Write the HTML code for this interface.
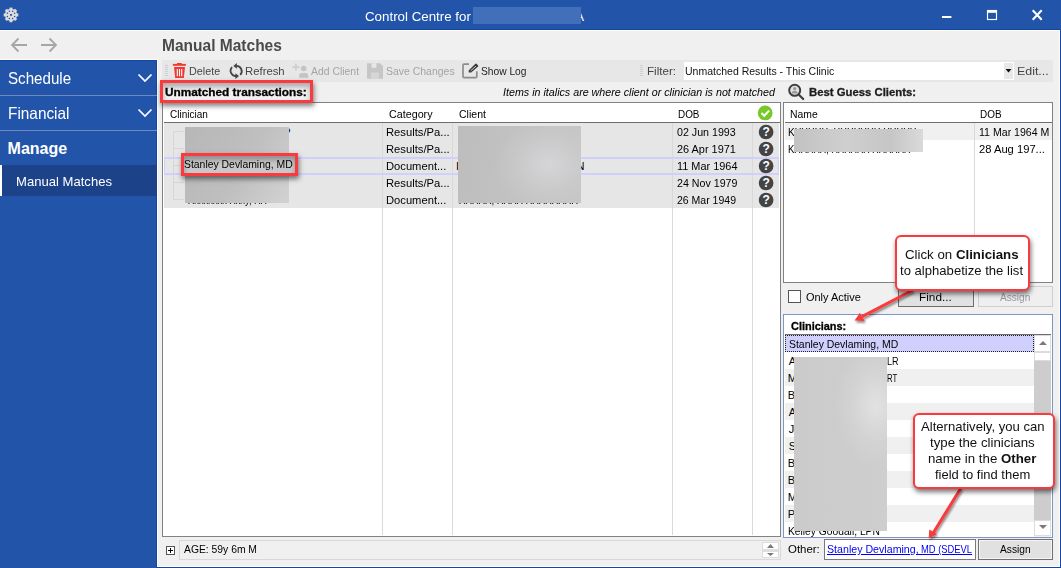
<!DOCTYPE html>
<html lang="en">
<head>
<meta charset="utf-8">
<title>Control Centre - Manual Matches</title>
<style>
*{box-sizing:border-box;margin:0;padding:0}
html,body{width:1061px;height:568px;overflow:hidden}
body{background:#f0f0f0;font-family:"Liberation Sans",Arial,sans-serif;font-size:11px;color:#000;position:relative}
.a,.t{position:absolute}
.t{white-space:nowrap;line-height:20px;transform-origin:0 50%;color:#000}
#titlebar{left:0;top:0;width:1061px;height:30px;background:#2255aa;border-bottom:1px solid #1247a8}
#sidebar{left:0;top:60px;width:157px;height:508px;background:#2255aa;border-top:1px solid #1247a8;border-right:1px solid #1247a8}
.sep{left:0;width:157px;height:1px;background:#7089c0}
.grid{background:#fff;border:1px solid #828282}
.vl{width:1px;background:#d9d9d9}
.hl{height:1px;background:#6e6e6e}
.q{width:15px;height:15px;border-radius:50%;background:#404040;color:#fff;font-weight:bold;font-size:12px;text-align:center;line-height:15px}
.red{border:3px solid #fa3a3e;box-shadow:1px 3px 5px rgba(0,0,0,.5),inset 0 4px 5px rgba(0,0,0,.28)}
.call{background:#fff;border:2px solid #fa3a3e;border-radius:6px;box-shadow:1px 3px 5px rgba(0,0,0,.55)}
.ct{font-size:13.33px;color:#111}
.btn{border:1px solid #adadad;background:#e1e1e1}
.grip{width:3px;height:11px;background:repeating-linear-gradient(#cfcfcf 0 1px,transparent 1px 2px)}
.lr{left:785px;width:249px;height:17px}
</style>
</head>
<body>
<!-- ===== title bar ===== -->
<div id="titlebar" class="a"></div>
<svg class="a" style="left:3px;top:7px" width="16" height="16" viewBox="0 0 16 16"><g fill="#dcdcdc"><circle cx="8" cy="7.900" r="6.100"/><g><rect x="6.500" y=".6" width="3" height="3"/><rect x="6.500" y="12.200" width="3" height="3"/><rect x=".7" y="6.400" width="3" height="3"/><rect x="12.300" y="6.400" width="3" height="3"/></g><g transform="rotate(45 8 7.900)"><rect x="6.500" y=".6" width="3" height="3"/><rect x="6.500" y="12.200" width="3" height="3"/><rect x=".7" y="6.400" width="3" height="3"/><rect x="12.300" y="6.400" width="3" height="3"/></g></g><g fill="#2255aa"><rect x="7.100" y="7" width="1.800" height="1.800"/><circle cx="6.400" cy="4.300" r=".75"/><circle cx="9.600" cy="4.300" r=".75"/><circle cx="4.400" cy="6.300" r=".75"/><circle cx="11.600" cy="6.300" r=".75"/><circle cx="4.400" cy="9.500" r=".75"/><circle cx="11.600" cy="9.500" r=".75"/><circle cx="6.400" cy="11.500" r=".75"/><circle cx="9.600" cy="11.500" r=".75"/></g></svg>
<div class="t" style="left:575px;top:7px;font-size:13.5px;color:#fff">A</div>
<div class="a" style="left:473px;top:7px;width:108px;height:17px;background:#426fba"></div>
<svg class="a" style="left:936px;top:5px" width="112" height="20" viewBox="0 0 112 20"><g fill="none" stroke="#fff"><path d="M6 12h9.400" stroke-width="2"/><rect x="51.500" y="5.500" width="9" height="9" stroke-width="1.150"/><path d="M51 6.400h10" stroke-width="2.800"/><path d="M96.700 5.300l9 9.400M105.700 5.300l-9 9.400" stroke-width="2.100"/></g></svg>
<div class="a" style="left:0;top:30px;width:1060px;height:537px;border:1px solid #fffdf6;border-left:0"></div>
<div class="a" style="left:1060px;top:30px;width:1px;height:538px;background:#1247a8"></div>
<div class="a" style="left:157px;top:567px;width:904px;height:1px;background:#1247a8"></div>
<div class="a" style="left:0;top:59px;width:158px;height:1px;background:#fffdf6"></div>
<div class="a" style="left:157px;top:59px;width:1px;height:508px;background:#fffdf6"></div>

<!-- ===== nav row ===== -->
<svg class="a" style="left:10px;top:37px" width="50" height="16" viewBox="0 0 50 16"><g fill="none" stroke="#a6a6a6" stroke-width="1.800"><path d="M17 8H2M8.500 1.500L2 8l6.500 6.500"/><path d="M31 8h15M39.500 1.500L46 8l-6.500 6.500"/></g></svg>

<!-- ===== sidebar ===== -->
<div id="sidebar" class="a"></div>
<div class="a sep" style="top:95px"></div>
<div class="a sep" style="top:130px"></div>
<div class="a" style="left:0;top:165px;width:157px;height:31px;background:#1c4389"></div>
<div class="a" style="left:0;top:165px;width:2px;height:31px;background:#fff"></div>
<svg class="a" style="left:137px;top:72px" width="16" height="50" viewBox="0 0 16 50"><g fill="none" stroke="#fff" stroke-width="1.700"><path d="M1.500 2.500l6.500 6.500 6.500-6.500"/><path d="M1.500 37.500l6.500 6.500 6.500-6.500"/></g></svg>

<!-- ===== toolbar ===== -->
<div class="a" style="left:162px;top:60px;width:891px;height:22px;background:#e7e7e7"></div>
<div class="a grip" style="left:165px;top:65px"></div>
<div class="a grip" style="left:640px;top:65px"></div>
<svg class="a" style="left:172px;top:62px" width="16" height="17" viewBox="0 0 16 17"><g fill="#f0392f"><rect x="5" y="1" width="4.700" height="1.500"/><rect x=".9" y="1.900" width="13" height="1.900"/><path d="M2 4.900h11l-1.200 11.200H3.200z"/></g><g stroke="#fff" stroke-width="1.100"><path d="M5.300 7v7.200M7.500 7v7.200M9.700 7v7.200"/></g></svg>
<svg class="a" style="left:229px;top:62px" width="15" height="18" viewBox="0 0 15 18"><g transform="translate(14.400 0) scale(-1 1)"><g fill="none" stroke="#444" stroke-width="1.800"><path d="M3.200 12.900A5.300 5.300 0 0 1 7.200 3.900"/><path d="M11.300 5.100A5.300 5.300 0 0 1 7.300 14.100"/></g><path d="M6.500 1l3.600 2.900-3.600 2.900z" fill="#444"/><path d="M8 11.200l-3.600 2.900L8 17z" fill="#444"/></g></svg>
<svg class="a" style="left:291px;top:62px" width="18" height="17" viewBox="0 0 18 17"><path d="M1.300 5h7.200M4.900 1.400v7.200" stroke="#d0d0d0" stroke-width="1.800" fill="none"/><g fill="#c4c4c4"><circle cx="12.700" cy="6.500" r="2.800"/><path d="M8.200 15.700v-2.400c0-1.400 1.300-2.300 2.800-2.300h3.400c1.500 0 2.800.9 2.800 2.300v2.400z"/></g></svg>
<svg class="a" style="left:367px;top:62px" width="17" height="17" viewBox="0 0 17 17"><path d="M0 1.200h13.200L16 4v12.700H0z" fill="#c6c6c6"/><rect x="4.600" y="1.200" width="4.800" height="4.600" fill="#e7e7e7"/><rect x="4" y="10.500" width="8" height="6.200" fill="#d6d6d6"/></svg>
<svg class="a" style="left:461px;top:62px" width="18" height="17" viewBox="0 0 18 17"><path d="M8 2.200H3.200a1.200 1.200 0 0 0-1.200 1.200v11a1.200 1.200 0 0 0 1.200 1.200h11.400a1.200 1.200 0 0 0 1.200-1.200V9.200" fill="none" stroke="#8c8c8c" stroke-width="1.700"/><path d="M7.800 10.600l-.2-2.200 6.800-6.600a.8.800 0 0 1 1.100 0l1.600 1.700a.8.800 0 0 1 0 1.100l-6.900 6z" fill="#3c3c3c"/><path d="M9.600 8.800l5.400-4.700" stroke="#e7e7e7" stroke-width=".8" fill="none"/></svg>
<div class="a" style="left:684px;top:62px;width:330px;height:18px;background:#fff"></div>
<div class="a" style="left:1004px;top:63px;width:9px;height:16px;background:#e8e8e8"></div>
<svg class="a" style="left:1005px;top:69px" width="7" height="4" viewBox="0 0 7 4"><path d="M.5 0h6L3.500 3.500z" fill="#111"/></svg>

<!-- ===== sub header ===== -->
<svg class="a" style="left:786px;top:83px" width="20" height="20" viewBox="0 0 20 20"><circle cx="8.700" cy="7.300" r="5.500" fill="#e2e2e2" stroke="#3e3e3e" stroke-width="2"/><circle cx="8.700" cy="5.700" r="1.700" fill="#999"/><path d="M5.600 10.400c0-1.700 1.400-2.300 3.100-2.300s3.100.6 3.100 2.300z" fill="#999"/><path d="M12.900 11.700l4.300 4.300" stroke="#3e3e3e" stroke-width="2.200" stroke-linecap="round"/></svg>

<!-- ===== left grid ===== -->
<div class="a grid" style="left:162px;top:102px;width:619px;height:435px">
  <div class="a hl" style="left:1px;top:19px;width:616px"></div>
  <div class="a" style="left:1px;top:20px;width:615px;height:85px;background:#e6e6e6"></div>
  <div class="a vl" style="left:219px;top:20px;height:412px"></div>
  <div class="a vl" style="left:289px;top:20px;height:412px"></div>
  <div class="a vl" style="left:509px;top:20px;height:412px"></div>
  <div class="a vl" style="left:589px;top:20px;height:412px"></div>
  <div class="a" style="left:1px;top:54px;width:615px;height:18px;border:2px solid #d0d0ff;border-left-width:1px;border-right-width:1px"></div>
</div>
<svg class="a" style="left:757px;top:105px" width="16" height="16" viewBox="0 0 16 16"><circle cx="8.200" cy="7.900" r="7.400" fill="#78c82c"/><path d="M4.500 8.100l2.700 2.700 4.900-5.200" fill="none" stroke="#fff" stroke-width="2.100"/></svg>
<svg class="a" style="left:172px;top:126px" width="14" height="80" viewBox="0 0 14 80"><path d="M1.500 5.500h11M1.500 5.500v68M1.500 22.500h11M1.500 39.500h11M1.500 56.500h11M1.500 73.500h11" fill="none" stroke="#d6d6d6" stroke-width="1"/></svg>
<div class="t" style="left:456px;top:156px">I</div>
<div class="t" style="left:283.2px;top:122px;">P</div>
<div class="t" style="left:188.0px;top:190px;transform:scaleX(0.848);">Xxxxxxxx Xxxy, XX</div>
<div class="t" style="left:576.5px;top:156px;">N</div>
<div class="t" style="left:459.0px;top:190px;transform:scaleX(0.888);">XXXXX, XXXX XXXXXXXX</div>
<div class="a" style="left:185px;top:127px;width:104px;height:76px;background:linear-gradient(120deg,#b7b7b7 0%,#bfbfbf 55%,#d2d2d2 100%)"></div>
<div class="a" style="left:458px;top:126px;width:123px;height:77px;background:radial-gradient(ellipse 45% 60% at 74% 50%,#d5d5d7 0%,rgba(204,204,206,.6) 60%,rgba(196,196,196,0) 100%),linear-gradient(100deg,#bdbdbd 0%,#c2c2c2 50%,#c6c6c6 100%)"></div>
<div class="a red" style="left:181px;top:153px;width:117px;height:23px;background:#c8c8c8"></div>

<!-- ===== right grid ===== -->
<div class="a grid" style="left:783px;top:102px;width:270px;height:181px">
  <div class="a hl" style="left:1px;top:19px;width:267px"></div>
  <div class="a" style="left:1px;top:20px;width:267px;height:17px;background:#f0f0f0"></div>
  <div class="a vl" style="left:190px;top:20px;height:159px"></div>
</div>
<div class="t" style="left:787.7px;top:122px;transform:scaleX(0.910);">KXXXXX, XXXXXXX XXXXX</div>
<div class="t" style="left:787.7px;top:139px;transform:scaleX(0.867);">KXXXXX, XXXXXX XXXXXX</div>
<div class="a" style="left:794px;top:129px;width:129px;height:23px;background:linear-gradient(90deg,#c2c2c2,#cfcfcf 40%,#c6c6c6 75%,#dadada)"></div>

<!-- ===== checkbox + buttons ===== -->
<div class="a" style="left:788px;top:290px;width:13px;height:13px;background:#fff;border:1px solid #555"></div>
<div class="a btn" style="left:898px;top:286px;width:76px;height:21px;border-color:#6e6e6e"></div>
<div class="a btn" style="left:978px;top:286px;width:75px;height:21px;background:#efefef;border-color:#cfcfcf"></div>

<!-- ===== clinicians ===== -->
<div class="a" style="left:783px;top:314px;width:270px;height:224px;background:#fff;border:1px solid #7b97c7"></div>
<div class="a" style="left:785px;top:334px;width:266px;height:1px;background:#6e6e6e"></div>
<div class="a lr" style="top:335px;height:17px;background:#d0d0ff;outline:1px dotted #222;outline-offset:-1px"></div><div class="t" style="left:788.7px;top:334px;transform:scaleX(0.950);">Stanley Devlaming, MD</div>
<div class="a lr" style="top:352px;height:17px;background:#fff"></div><div class="t" style="left:788.7px;top:351px;">A</div>
<div class="a lr" style="top:369px;height:17px;background:#f0f0f0"></div><div class="t" style="left:787.7px;top:368px;">M</div>
<div class="a lr" style="top:386px;height:17px;background:#fff"></div><div class="t" style="left:787.7px;top:385px;">B</div>
<div class="a lr" style="top:403px;height:17px;background:#f0f0f0"></div><div class="t" style="left:788.7px;top:402px;">A</div>
<div class="a lr" style="top:420px;height:17px;background:#fff"></div><div class="t" style="left:788.7px;top:419px;">J</div>
<div class="a lr" style="top:437px;height:17px;background:#f0f0f0"></div><div class="t" style="left:788.7px;top:436px;">S</div>
<div class="a lr" style="top:454px;height:17px;background:#fff"></div><div class="t" style="left:787.7px;top:453px;">B</div>
<div class="a lr" style="top:471px;height:17px;background:#f0f0f0"></div><div class="t" style="left:787.7px;top:470px;">B</div>
<div class="a lr" style="top:488px;height:17px;background:#fff"></div><div class="t" style="left:787.7px;top:487px;">M</div>
<div class="a lr" style="top:505px;height:17px;background:#f0f0f0"></div><div class="t" style="left:787.7px;top:504px;">P</div>
<div class="a lr" style="top:522px;height:15px;background:#fff"></div><div class="t" style="left:787.8px;top:521px;transform:scaleX(0.933);">Kelley Goodall, LPN</div>
<div class="t" style="left:886.5px;top:351px;transform:scaleX(0.823);">LR</div>
<div class="t" style="left:886.6px;top:368px;transform:scaleX(0.707);">RT</div>
<div class="a" style="left:794px;top:357px;width:93px;height:174px;background:radial-gradient(ellipse 45% 35% at 88% 28%,#e2e2e2 0%,rgba(214,214,214,.6) 60%,rgba(205,205,205,0) 100%),linear-gradient(90deg,#cbcbcb 0%,#cecece 100%)"></div>
<div class="a" style="left:1034px;top:335px;width:17px;height:202px;background:#f0f0f0"></div>
<div class="a" style="left:1034px;top:335px;width:17px;height:17px;background:#fff;border:1px solid #dcdcdc"></div>
<div class="a" style="left:1034px;top:520px;width:17px;height:16px;background:#fff;border:1px solid #dcdcdc"></div>
<div class="a" style="left:1034px;top:352px;width:17px;height:9px;background:#fff;border:1px solid #dcdcdc"></div>
<div class="a" style="left:1034px;top:361px;width:17px;height:159px;background:#cdcdcd"></div>
<svg class="a" style="left:1039px;top:341px" width="8" height="4" viewBox="0 0 8 4"><path d="M0 4h8L4 0z" fill="#7a7a7a"/></svg>
<svg class="a" style="left:1039px;top:525px" width="8" height="4" viewBox="0 0 8 4"><path d="M0 0h8L4 4z" fill="#7a7a7a"/></svg>

<!-- ===== bottom bar ===== -->
<div class="a" style="left:166px;top:546px;width:9px;height:9px;background:#fff;border:1px solid #555"></div>
<svg class="a" style="left:166px;top:546px" width="9" height="9" viewBox="0 0 9 9"><path d="M2 4.500h5M4.500 2v5" stroke="#000" stroke-width="1"/></svg>
<div class="a" style="left:179px;top:540px;width:602px;height:20px;border:1px solid #d8d8d8"></div>
<div class="a" style="left:762px;top:542px;width:17px;height:16px;background:#fff;border:1px solid #dcdcdc"></div>
<div class="a" style="left:763px;top:549px;width:15px;height:3px;background:#dedede"></div>
<svg class="a" style="left:767px;top:544px" width="7" height="12" viewBox="0 0 7 12"><path d="M0 4h7L3.500 0zM0 9h7L3.500 12z" fill="#7a7a7a"/></svg>
<div class="a" style="left:824px;top:539px;width:152px;height:21px;background:#fff;border:1px solid #7a7a7a"></div>
<div class="a btn" style="left:978px;top:539px;width:75px;height:21px;border:1px solid #707070;box-shadow:inset 0 0 0 1px #f4f4f4"></div>

<div class="a red" style="left:160px;top:80px;width:153px;height:23px;background:#f0f0f0"></div>
<div class="t" style="left:365.4px;top:7px;font-size:13.5px;transform:scaleX(0.987);color:#fff">Control Centre for</div>
<div class="t" style="left:161.7px;top:36px;font-size:16px;transform:scaleX(0.970);color:#4a4a4a;font-weight:bold">Manual Matches</div>
<div class="t" style="left:7.7px;top:68px;font-size:16.5px;transform:scaleX(0.918);color:#fff">Schedule</div>
<div class="t" style="left:8.0px;top:103px;font-size:16.5px;transform:scaleX(0.931);color:#fff">Financial</div>
<div class="t" style="left:7.6px;top:139px;font-size:16px;color:#fff;font-weight:bold">Manage</div>
<div class="t" style="left:15.9px;top:172px;font-size:13.5px;transform:scaleX(0.969);color:#fff">Manual Matches</div>
<div class="t" style="left:188.6px;top:61px;transform:scaleX(0.981);color:#444">Delete</div>
<div class="t" style="left:245.4px;top:61px;transform:scaleX(1.030);color:#444">Refresh</div>
<div class="t" style="left:311.4px;top:61px;transform:scaleX(0.947);color:#a4a4a8">Add Client</div>
<div class="t" style="left:385.5px;top:61px;transform:scaleX(0.951);color:#a4a4a8">Save Changes</div>
<div class="t" style="left:480.7px;top:61px;transform:scaleX(0.929);color:#222">Show Log</div>
<div class="t" style="left:647.2px;top:61px;transform:scaleX(1.058);color:#444">Filter:</div>
<div class="t" style="left:684.6px;top:61px;transform:scaleX(0.955);color:#111">Unmatched Results - This Clinic</div>
<div class="t" style="left:1017.3px;top:61px;transform:scaleX(1.127);color:#444">Edit...</div>
<div class="t" style="left:165.3px;top:82px;transform:scaleX(1.074);font-weight:bold;color:#000;-webkit-text-stroke:.3px #000">Unmatched transactions:</div>
<div class="t" style="left:502.7px;top:82px;transform:scaleX(0.973);font-style:italic">Items in italics are where client or clinician is not matched</div>
<div class="t" style="left:809.0px;top:82px;transform:scaleX(1.030);font-weight:bold;color:#1c1c1c;-webkit-text-stroke:.3px #1c1c1c">Best Guess Clients:</div>
<div class="t" style="left:169.8px;top:104px;transform:scaleX(0.912);">Clinician</div>
<div class="t" style="left:389.0px;top:104px;transform:scaleX(0.976);">Category</div>
<div class="t" style="left:458.7px;top:104px;transform:scaleX(0.957);">Client</div>
<div class="t" style="left:677.8px;top:104px;transform:scaleX(0.900);">DOB</div>
<div class="t" style="left:789.7px;top:104px;transform:scaleX(0.943);">Name</div>
<div class="t" style="left:979.8px;top:104px;transform:scaleX(0.904);">DOB</div>
<div class="t" style="left:385.5px;top:122px;transform:scaleX(1.021);">Results/Pa...</div>
<div class="t" style="left:676.6px;top:122px;transform:scaleX(0.970);">02 Jun 1993</div>
<svg class="a" style="left:758px;top:124px" width="16" height="16" viewBox="0 0 16 16"><circle cx="8.1" cy="8.000" r="7.350" fill="#444"/></svg><div class="t" style="left:762.6px;top:122px;font-size:12px;color:#fff;font-weight:bold">?</div>
<div class="t" style="left:385.5px;top:139px;transform:scaleX(1.021);">Results/Pa...</div>
<div class="t" style="left:677.2px;top:139px;transform:scaleX(0.993);">26 Apr 1971</div>
<svg class="a" style="left:758px;top:141px" width="16" height="16" viewBox="0 0 16 16"><circle cx="8.1" cy="8.000" r="7.350" fill="#444"/></svg><div class="t" style="left:762.6px;top:139px;font-size:12px;color:#fff;font-weight:bold">?</div>
<div class="t" style="left:385.5px;top:156px;transform:scaleX(1.017);">Document...</div>
<div class="t" style="left:676.5px;top:156px;transform:scaleX(0.992);">11 Mar 1964</div>
<svg class="a" style="left:758px;top:158px" width="16" height="16" viewBox="0 0 16 16"><circle cx="8.1" cy="8.000" r="7.350" fill="#444"/></svg><div class="t" style="left:762.6px;top:156px;font-size:12px;color:#fff;font-weight:bold">?</div>
<div class="t" style="left:385.5px;top:173px;transform:scaleX(1.021);">Results/Pa...</div>
<div class="t" style="left:677.2px;top:173px;transform:scaleX(0.969);">24 Nov 1979</div>
<svg class="a" style="left:758px;top:175px" width="16" height="16" viewBox="0 0 16 16"><circle cx="8.1" cy="8.000" r="7.350" fill="#444"/></svg><div class="t" style="left:762.6px;top:173px;font-size:12px;color:#fff;font-weight:bold">?</div>
<div class="t" style="left:385.5px;top:190px;transform:scaleX(1.017);">Document...</div>
<div class="t" style="left:677.2px;top:190px;transform:scaleX(0.955);">26 Mar 1949</div>
<svg class="a" style="left:758px;top:192px" width="16" height="16" viewBox="0 0 16 16"><circle cx="8.1" cy="8.000" r="7.350" fill="#444"/></svg><div class="t" style="left:762.6px;top:190px;font-size:12px;color:#fff;font-weight:bold">?</div>
<div class="t" style="left:979.0px;top:122px;transform:scaleX(0.962);">11 Mar 1964 M</div>
<div class="t" style="left:979.2px;top:139px;transform:scaleX(1.017);">28 Aug 197...</div>
<div class="t" style="left:805.6px;top:287px;transform:scaleX(0.995);">Only Active</div>
<div class="t" style="left:918.5px;top:287px;transform:scaleX(1.072);">Find...</div>
<div class="t" style="left:999.8px;top:287px;transform:scaleX(0.918);color:#9a9aa4">Assign</div>
<div class="t" style="left:791.3px;top:316px;transform:scaleX(0.993);font-weight:bold;color:#000;-webkit-text-stroke:.3px #000">Clinicians:</div>
<div class="t" style="left:183.6px;top:539px;transform:scaleX(0.940);">AGE: 59y 6m M</div>
<div class="t" style="left:787.6px;top:539px;transform:scaleX(1.040);">Other:</div>
<div class="t" style="left:999.8px;top:539px;transform:scaleX(0.927);">Assign</div>
<div class="t" style="left:184.3px;top:154px;transform:scaleX(0.946);color:#000">Stanley Devlaming, MD</div>
<div class="t" style="left:826.8px;top:539px;transform:scaleX(0.967);color:#0000f0;text-decoration:underline;white-space:pre">Stanley Devlaming, </div>
<div class="t" style="left:921.4px;top:539px;transform:scaleX(0.853);color:#0000f0;text-decoration:underline">MD (SDEVL</div>

<!-- ===== callouts ===== -->
<svg class="a" style="left:840px;top:280px;overflow:visible" width="90" height="50" viewBox="840 280 90 50"><defs><filter id="sh" x="-30%" y="-30%" width="160%" height="160%"><feDropShadow dx="1" dy="2" stdDeviation="1.300" flood-color="#000" flood-opacity=".45"/></filter></defs><g filter="url(#sh)"><path d="M913 290L862 316.700" stroke="#fa3a3e" stroke-width="3.100" fill="none"/><path d="M854.600 320.500l5.300-7.700 4.900 8.100z" fill="#fa3a3e"/></g></svg>
<div class="a call" style="left:895px;top:235px;width:135px;height:56px"></div>
<svg class="a" style="left:920px;top:480px;overflow:visible" width="50" height="60" viewBox="920 480 50 60"><g filter="url(#sh)"><path d="M961 488L933.200 533" stroke="#fa3a3e" stroke-width="3.100" fill="none"/><path d="M928.700 538.300l.6-8.900 7.800 4.600z" fill="#fa3a3e"/></g></svg>
<div class="a call" style="left:913px;top:413px;width:142px;height:76px"></div>
<div class="t" style="left:905.0px;top:245px;font-size:13.5px;transform:scaleX(0.983);color:#111">Click on <b>Clinicians</b></div>
<div class="t" style="left:900.0px;top:261px;font-size:13.5px;transform:scaleX(0.970);color:#111">to alphabetize the list</div>
<div class="t" style="left:921.1px;top:417px;font-size:13.5px;transform:scaleX(0.971);color:#111">Alternatively, you can</div>
<div class="t" style="left:930.0px;top:433px;font-size:13.5px;transform:scaleX(0.983);color:#111">type the clinicians</div>
<div class="t" style="left:928.0px;top:449px;font-size:13.5px;transform:scaleX(0.982);color:#111">name in the <b>Other</b></div>
<div class="t" style="left:934.7px;top:465px;font-size:13.5px;transform:scaleX(0.961);color:#111">field to find them</div>
</body>
</html>
